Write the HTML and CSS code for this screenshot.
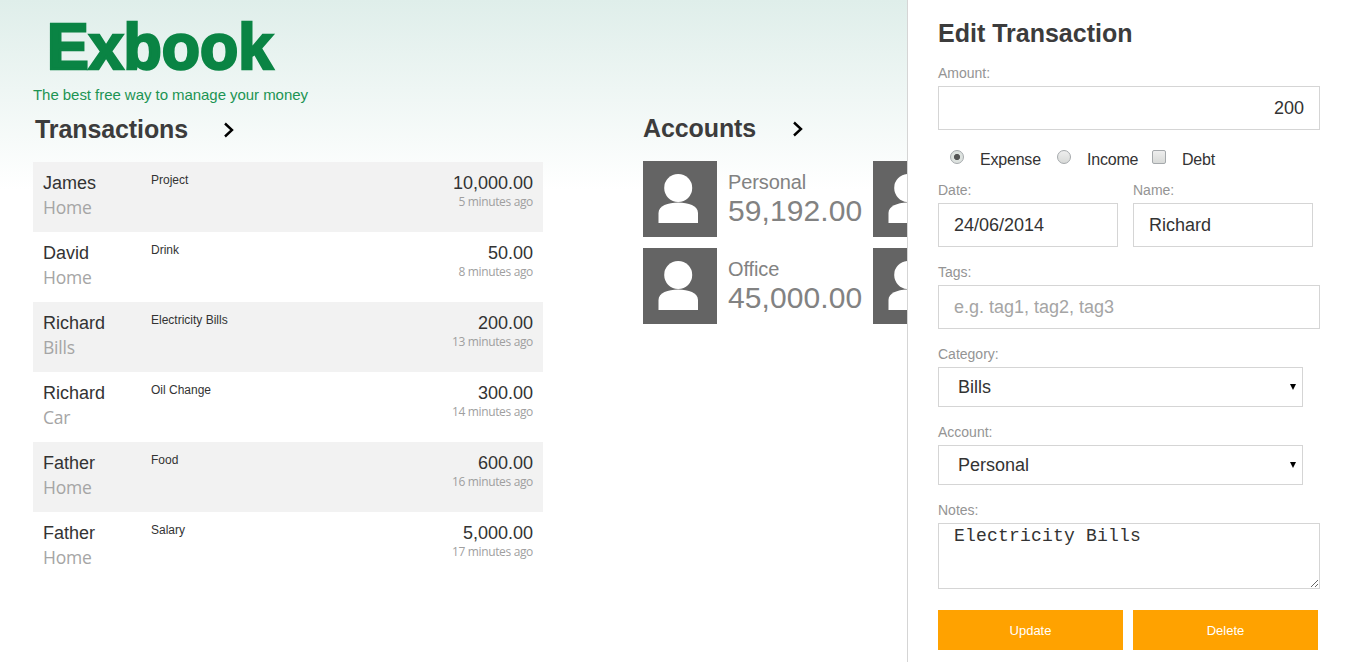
FILE: index.html
```html
<!DOCTYPE html>
<html lang="en">

<head>
    <meta charset="UTF-8">
    <meta name="viewport" content="width=device-width, initial-scale=1.0">
    <title>Exbook</title>
    <link rel="stylesheet" href="styles.css">
</head>

<body>
    <svg class="symbols">
        <symbol id="person" viewBox="0 0 74 76">
            <circle cx="35.2" cy="27" r="14" />
            <path d="M15.5 62V52C15.5 45 25 41.6 35.2 41.6S55 45 55 52V62Z" />
        </symbol>
        <symbol id="chevron" viewBox="0 0 12 16">
            <path d="M2 1.5L9 8L2 14.5" fill="none" stroke="#000" stroke-width="2.4" />
        </symbol>
    </svg>

    <main class="content">
        <svg class="logo" width="320" height="108">
            <text class="logo-name" x="47" y="69" textLength="226" lengthAdjust="spacingAndGlyphs">Exbook</text>
            <text class="logo-tagline" x="33" y="99.5" textLength="275">The best free way to manage your money</text>
        </svg>

        <div class="columns">
            <section class="transactions">
                <h2 class="section-title">Transactions <svg class="chevron"><use href="#chevron" /></svg></h2>
                <ul class="list">
                    <li class="row">
                        <div class="who"><span class="name">James</span><span class="category">Home</span></div>
                        <div class="note">Project</div>
                        <div class="sum"><span class="value">10,000.00</span><span class="time">5 minutes ago</span></div>
                    </li>
                    <li class="row">
                        <div class="who"><span class="name">David</span><span class="category">Home</span></div>
                        <div class="note">Drink</div>
                        <div class="sum"><span class="value">50.00</span><span class="time">8 minutes ago</span></div>
                    </li>
                    <li class="row">
                        <div class="who"><span class="name">Richard</span><span class="category">Bills</span></div>
                        <div class="note">Electricity Bills</div>
                        <div class="sum"><span class="value">200.00</span><span class="time">13 minutes ago</span></div>
                    </li>
                    <li class="row">
                        <div class="who"><span class="name">Richard</span><span class="category">Car</span></div>
                        <div class="note">Oil Change</div>
                        <div class="sum"><span class="value">300.00</span><span class="time">14 minutes ago</span></div>
                    </li>
                    <li class="row">
                        <div class="who"><span class="name">Father</span><span class="category">Home</span></div>
                        <div class="note">Food</div>
                        <div class="sum"><span class="value">600.00</span><span class="time">16 minutes ago</span></div>
                    </li>
                    <li class="row">
                        <div class="who"><span class="name">Father</span><span class="category">Home</span></div>
                        <div class="note">Salary</div>
                        <div class="sum"><span class="value">5,000.00</span><span class="time">17 minutes ago</span></div>
                    </li>
                </ul>
            </section>

            <section class="accounts">
                <h2 class="section-title">Accounts <svg class="chevron"><use href="#chevron" /></svg></h2>
                <div class="account-grid">
                    <div class="account">
                        <svg class="avatar"><use href="#person" /></svg>
                        <div class="account-info"><span class="account-name">Personal</span><span class="balance">59,192.00</span></div>
                    </div>
                    <div class="account">
                        <svg class="avatar"><use href="#person" /></svg>
                    </div>
                    <div class="account">
                        <svg class="avatar"><use href="#person" /></svg>
                        <div class="account-info"><span class="account-name">Office</span><span class="balance">45,000.00</span></div>
                    </div>
                    <div class="account">
                        <svg class="avatar"><use href="#person" /></svg>
                    </div>
                </div>
            </section>
        </div>
    </main>

    <aside class="panel">
        <h2 class="panel-title">Edit Transaction</h2>
        <form>
            <div class="field">
                <label for="amount">Amount:</label>
                <input class="text amount" type="text" id="amount" value="200">
            </div>
            <div class="options">
                <label class="option expense"><input type="radio" name="type" checked>Expense</label>
                <label class="option income"><input type="radio" name="type">Income</label>
                <label class="option"><input type="checkbox">Debt</label>
            </div>
            <div class="pair">
                <div class="field">
                    <label for="date">Date:</label>
                    <input class="text" type="text" id="date" value="24/06/2014">
                </div>
                <div class="field">
                    <label for="name">Name:</label>
                    <input class="text" type="text" id="name" value="Richard">
                </div>
            </div>
            <div class="field">
                <label for="tags">Tags:</label>
                <input class="text" type="text" id="tags" placeholder="e.g. tag1, tag2, tag3">
            </div>
            <div class="field">
                <label for="category">Category:</label>
                <div class="select">
                    <select id="category"><option>Bills</option></select>
                </div>
            </div>
            <div class="field">
                <label for="account">Account:</label>
                <div class="select">
                    <select id="account"><option>Personal</option></select>
                </div>
            </div>
            <div class="field">
                <label for="notes">Notes:</label>
                <textarea id="notes">Electricity Bills</textarea>
            </div>
            <div class="buttons">
                <button type="button">Update</button>
                <button type="button">Delete</button>
            </div>
        </form>
    </aside>
</body>

</html>
```
FILE: styles.css
```css
* {
    box-sizing: border-box;
}
body {
    font-family: "Liberation Sans", Arial, sans-serif;
    margin: 0;
    display: flex;
    height: 100vh;
    overflow: hidden;
    color: #333;
    background: #fff linear-gradient(#dfeeea, #fff 190px) no-repeat;
}
.symbols {
    display: none;
}

/* left side */
.content {
    width: 907px;
    flex: none;
    overflow: hidden;
}
.logo {
    display: block;
}
.logo-name {
    font-size: 64px;
    font-weight: bold;
    fill: #0a8444;
    stroke: #0a8444;
    stroke-width: 2.6px;
}
.logo-tagline {
    font-size: 15px;
    fill: #1c9453;
}
.columns {
    display: flex;
    align-items: flex-start;
    padding-left: 33px;
}
.section-title {
    display: flex;
    align-items: center;
    margin: 0;
    font-size: 25px;
    line-height: 30px;
    letter-spacing: -0.1px;
    color: #3c3c3c;
}
.chevron {
    width: 12px;
    height: 16px;
    margin-top: 2px;
}
.transactions {
    flex: none;
    width: 510px;
    padding-top: 6px;
}
.transactions .section-title {
    padding-left: 2px;
    gap: 35px;
}
.list {
    list-style: none;
    margin: 18px 0 0;
    padding: 0;
}
.row {
    display: flex;
    height: 70px;
    padding: 9px 10px;
}
.row:nth-child(odd) {
    background-color: #f2f2f2;
}
.who {
    width: 108px;
}
.name, .category, .value, .time {
    display: block;
}
.name, .value {
    font-size: 18px;
    line-height: 24px;
}
.category {
    font-family: "Open Sans", sans-serif;
    font-size: 17.5px;
    line-height: 25px;
    letter-spacing: -0.2px;
    color: #a5a5a5;
}
.note {
    flex: 1;
    font-size: 12px;
    line-height: 18px;
}
.sum {
    text-align: right;
}
.time {
    font-family: "Open Sans", sans-serif;
    font-size: 12px;
    line-height: 14px;
    letter-spacing: -0.35px;
    color: #9f9f9f;
}
.accounts {
    flex: none;
    margin-left: 100px;
    padding-top: 5px;
}
.accounts .section-title {
    gap: 36px;
}
.account-grid {
    display: grid;
    grid-template-columns: 230px 230px;
    row-gap: 11px;
    margin-top: 18px;
}
.account {
    display: flex;
    gap: 11px;
}
.avatar {
    width: 74px;
    height: 76px;
    background-color: #646464;
    fill: #fff;
}
.account-info {
    padding-top: 9px;
    color: #828282;
}
.account-name, .balance {
    display: block;
}
.account-name {
    font-size: 20px;
    line-height: 24px;
    letter-spacing: -0.1px;
}
.balance {
    font-size: 30px;
    line-height: 34px;
    letter-spacing: 0.1px;
}

/* edit panel */
.panel {
    flex: 1;
    padding: 18px 0 0 30px;
    background-color: #fff;
    border-left: 1px solid #d5d5d5;
}
.panel-title {
    margin: 0 0 17px;
    font-size: 25px;
    line-height: 30px;
    color: #3c3c3c;
}
.field {
    margin-bottom: 17px;
}
.field label {
    display: block;
    font-size: 14px;
    line-height: 16px;
    margin-bottom: 5px;
    color: #949494;
}
.text, select, textarea {
    display: block;
    border: 1px solid #d5d5d5;
    border-radius: 0;
    background-color: #fff;
    color: #333;
    font-family: inherit;
    font-size: 18px;
}
.text {
    width: 382px;
    height: 44px;
    padding: 0 15px;
}
.text::placeholder {
    color: #a5a5a5;
}
.amount {
    text-align: right;
}
.options {
    display: flex;
    height: 35px;
    padding: 3px 0 0 12px;
}
.option {
    display: flex;
    gap: 16px;
    font-size: 16px;
    line-height: 19px;
    letter-spacing: -0.2px;
}
.expense {
    width: 107px;
}
.income {
    width: 95px;
}
.option input {
    appearance: none;
    width: 14px;
    height: 14px;
    margin: 0;
    border: 1px solid #a5a9ac;
    background: linear-gradient(#eee, #d8dad8);
}
.option input[type="radio"] {
    border-radius: 50%;
}
.option input[type="checkbox"] {
    border-radius: 2px;
}
.option input:checked {
    background: radial-gradient(circle, #555 2.7px, #dde2df 3.5px);
}
.pair {
    display: flex;
    gap: 15px;
}
.pair .text {
    width: 180px;
}
.select {
    display: flex;
    align-items: center;
    width: 365px;
}
.select::after {
    content: "";
    width: 0;
    margin-left: -13px;
    border: 3px solid transparent;
    border-top: 6px solid #000;
    border-bottom: 0;
}
select {
    appearance: none;
    flex: none;
    width: 365px;
    height: 40px;
    padding: 0 19px;
}
textarea {
    width: 382px;
    height: 66px;
    padding: 2px 15px;
    font-family: "Liberation Mono", monospace;
    letter-spacing: 0.2px;
}
.buttons {
    display: flex;
    gap: 10px;
    margin-top: 21px;
}
button {
    width: 185px;
    height: 40px;
    border: none;
    background-color: #ffa200;
    color: #fff;
    font-family: inherit;
    font-size: 13px;
}
```
